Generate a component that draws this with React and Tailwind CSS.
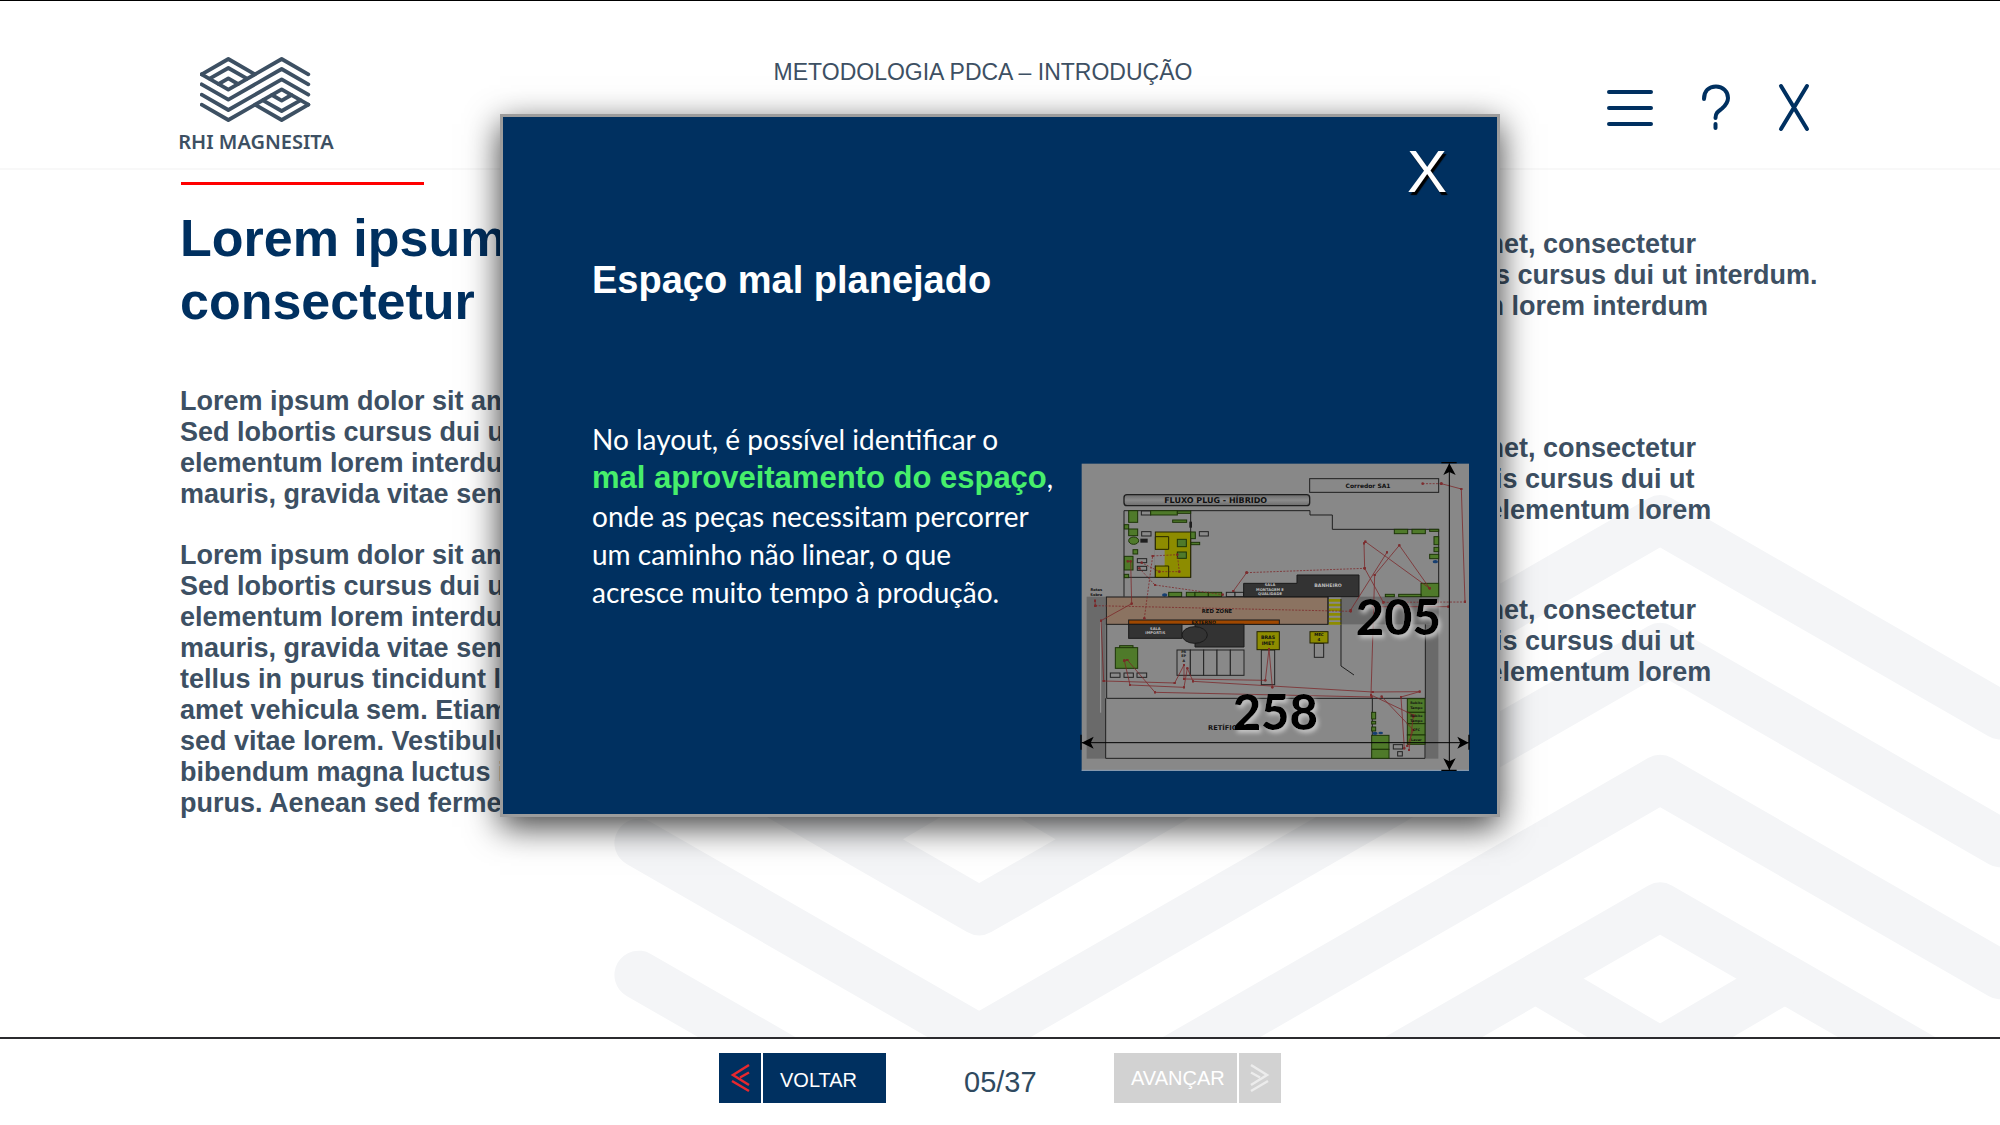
const LOGO_LINES = [
  "M155 134 L235 88 L315 134",
  "M155 134 L235 180 L395 88 L475 134",
  "M155 164 L235 210 L395 118 L475 164",
  "M155 195 L235 241 L395 149 L475 195",
  "M155 225 L235 271 L395 179 L475 225",
  "M315 225 L395 271 L475 225",
  "M179 147 L235 115 L291 147",
  "M206 163 L235 146 L264 163",
  "M339 212 L395 244 L451 212",
  "M366 196 L395 213 L424 196",
];

function LogoMark() {
  return LOGO_LINES.map((d) => <path key={d} d={d} />);
}

function Watermark() {
  return (
    <svg
      aria-hidden="true"
      className="pointer-events-none absolute inset-0 h-full w-full"
      viewBox="0 0 2000 868"
      preserveAspectRatio="xMaxYMax slice"
    >
      <g
        transform="translate(-21 -24) scale(4.256)"
        fill="none"
        stroke="#f4f5f7"
        strokeWidth="11.4"
        strokeLinecap="round"
        strokeLinejoin="round"
      >
        <LogoMark />
      </g>
    </svg>
  );
}

function Header() {
  return (
    <header className="flex h-[169px] items-start justify-between border-b-2 border-[#f8f8f8] pl-[178px] pr-[186px]">
      <a href="#inicio" className="mt-[55px] flex w-[156px] flex-col items-center text-[#3d5063]">
        <svg className="h-[67px] w-[112px]" viewBox="150 79 336 201" aria-hidden="true">
          <g fill="none" stroke="currentColor" strokeWidth="11.4" strokeLinecap="round" strokeLinejoin="round">
            <LogoMark />
          </g>
        </svg>
        <span className="mt-[7px] whitespace-nowrap font-['Noto_Sans',sans-serif] text-[20px] font-semibold leading-6">
          RHI MAGNESITA
        </span>
      </a>
      <p className="mt-[57px] flex-1 pl-[28px] text-center text-[23px] leading-7 text-[#3d5063]">
        METODOLOGIA PDCA – INTRODUÇÃO
      </p>
      <nav className="mt-[80px] flex text-[#003060]" aria-label="Ferramentas">
        <button type="button" aria-label="Menu">
          <svg className="h-[52px] w-[52px]" viewBox="0 0 52 52" fill="none" stroke="currentColor" strokeWidth="4" strokeLinecap="round">
            <path d="M5 11 H47 M5 27 H47 M5 43 H47" />
          </svg>
        </button>
        <button type="button" aria-label="Ajuda" className="ml-[38px]">
          <svg className="h-[52px] w-[44px]" viewBox="0 0 44 52" fill="none" stroke="currentColor" strokeWidth="4" strokeLinecap="round" strokeLinejoin="round">
            <path d="M10 18 C10 10 15 5.500 22 5.500 C29 5.500 34 10.500 34 17 C34 22 31.500 24.500 28 27.500 C24 30.500 21.500 32 21.500 37" />
            <path d="M21.500 43 V47" />
          </svg>
        </button>
        <button type="button" aria-label="Fechar curso" className="ml-[36px]">
          <svg className="h-[52px] w-[40px]" viewBox="0 0 40 52" fill="none" stroke="currentColor" strokeWidth="4" strokeLinecap="round">
            <path d="M7 5 L33 48 M33 5 L7 48" />
          </svg>
        </button>
      </nav>
    </header>
  );
}

const LEFT_PARAGRAPHS = [
  [
    "Lorem ipsum dolor sit amet, consectetur elit.",
    "Sed lobortis cursus dui ut interdum. Sed",
    "elementum lorem interdum, ultrices",
    "mauris, gravida vitae sem.",
  ],
  [
    "Lorem ipsum dolor sit amet, consectetur elit.",
    "Sed lobortis cursus dui ut interdum. Sed",
    "elementum lorem interdum, ultrices",
    "mauris, gravida vitae sem. Donec",
    "tellus in purus tincidunt lacinia sit",
    "amet vehicula sem. Etiam varius",
    "sed vitae lorem. Vestibulum non",
    "bibendum magna luctus id ornare",
    "purus. Aenean sed fermentum.",
  ],
];

function Lines({ lines }) {
  return lines.map((line) => (
    <span key={line} className="block whitespace-nowrap">
      {line}
    </span>
  ));
}

function Lesson() {
  return (
    <main className="relative flex-1 overflow-hidden">
      <Watermark />
      <div className="relative flex pl-[180px] text-[27px] font-bold leading-[31px] text-[#3d5063]">
        <section className="w-[994px] shrink-0 pt-[12px]">
          <div className="ml-px h-[3px] w-[243px] bg-[#ff0000]" />
          <h1 className="mt-[22px] text-[52px] leading-[63px] text-[#003060]">
            Lorem ipsum
            <br />
            consectetur
          </h1>
          <p className="mt-[53px]">
            <Lines lines={LEFT_PARAGRAPHS[0]} />
          </p>
          <p className="mt-[30px]">
            <Lines lines={LEFT_PARAGRAPHS[1]} />
          </p>
        </section>
        <section className="pt-[59px]">
          <p>
            <Lines
              lines={[
                "Lorem ipsum dolor sit amet, consectetur",
                "adipiscing elit. Duis purus cursus dui ut interdum.",
                "Interdum, Sed elementum lorem interdum",
              ]}
            />
          </p>
          <p className="mt-[111px]">
            <Lines
              lines={[
                "Lorem ipsum dolor sit amet, consectetur",
                "adipiscing elit Sed lobortis cursus dui ut",
                "Sed interdum. Sed vitae elementum lorem",
              ]}
            />
          </p>
          <p className="mt-[69px]">
            <Lines
              lines={[
                "Lorem ipsum dolor sit amet, consectetur",
                "adipiscing elit Sed lobortis cursus dui ut",
                "Sed interdum. Sed vitae elementum lorem",
              ]}
            />
          </p>
        </section>
      </div>
    </main>
  );
}

const GREEN_BOXES = [
  [176, 182, 27, 35], [242, 182, 80, 13], [322, 183, 40, 7], [308, 210, 42, 7],
  [163, 224, 13, 13], [176, 237, 27, 20], [362, 246, 14, 20], [363, 277, 26, 7],
  [189, 299, 14, 13], [163, 319, 26, 41], [163, 373, 13, 10], [296, 427, 39, 13],
  [349, 427, 26, 13], [375, 427, 40, 13], [415, 427, 40, 13], [973, 238, 40, 13],
  [1026, 238, 40, 13], [1079, 238, 27, 6], [1092, 260, 14, 24], [1092, 292, 14, 13],
  [1079, 313, 27, 13], [1053, 400, 53, 40], [946, 433, 27, 7], [986, 433, 67, 7],
  [149, 587, 40, 10], [136, 593, 67, 62], [905, 787, 12, 20], [905, 814, 12, 8],
  [905, 831, 12, 12], [905, 856, 52, 42], [905, 898, 52, 27], [1012, 746, 53, 41],
  [1012, 787, 53, 34], [1012, 821, 53, 34], [1012, 855, 53, 28],
];

const OUTLINE_BOXES = [
  [214, 183, 28, 12], [215, 245, 28, 13], [388, 245, 27, 13], [202, 326, 28, 12],
  [202, 349, 28, 12], [469, 427, 26, 13], [495, 427, 26, 13], [121, 669, 29, 13],
  [162, 669, 28, 13], [201, 669, 29, 13], [321, 600, 40, 76], [361, 600, 40, 76],
  [401, 600, 40, 76], [441, 600, 40, 76], [481, 600, 41, 76], [574, 600, 40, 104],
  [733, 580, 28, 42], [970, 884, 28, 13], [983, 905, 14, 13],
];

const ROUTES = [
  "M173 334 L182 334 L185 461 L93 512 L101 693 L314 699 L342 645 L342 687 L586 691 L597 597 L607 712",
  "M163 632 L180 705 L342 712 L352 655 L369 694 L908 726 L1049 725 L993 741 L1003 895",
  "M163 632 L172 630 L255 727 L905 741",
  "M490 423 L530 368",
  "M842 480 L951 307",
  "M1079 415 L886 275 L882 280 L884 355 L940 457",
  "M1079 415 L988 286 L914 375 L903 735 L1030 795",
  "M908 470 L1135 470",
  "M935 740 L1030 840 L1012 888 M1030 800 L1017 900",
  "M1114 101 L1174 117 L1185 455",
  "M75 452 L76 468",
];

const DASHED_ROUTES = [
  "M530 368 L884 355",
  "M76 467 L842 484",
  "M223 505 L248 318 L322 314 L328 365 L268 365 L215 338",
  "M208 355 L255 405 L458 434",
  "M1058 101 L1114 101",
  "M940 457 L1185 456",
];

function Boxes({ boxes }) {
  return boxes.map(([x, y, width, height]) => (
    <rect key={`${x}-${y}`} x={x} y={y} width={width} height={height} />
  ));
}

function FloorPlan() {
  return (
    <svg
      role="img"
      aria-label="Layout Fluxo Plug - Híbrido"
      className="w-[390px] shrink-0 font-['DejaVu_Sans',sans-serif] font-bold"
      viewBox="30 36 1170 928"
    >
      <defs>
        <marker id="dot" viewBox="0 0 8 8" refX="4" refY="4" markerWidth="8" markerHeight="8" markerUnits="userSpaceOnUse">
          <circle cx="4" cy="4" r="4" fill="#7c2426" />
        </marker>
        <filter id="halo" x="-20%" y="-20%" width="150%" height="160%">
          <feDropShadow dx="7" dy="9" stdDeviation="6" floodColor="#d0d0d0" floodOpacity="0.85" />
        </filter>
        <linearGradient id="plate" x1="0" y1="0" x2="0" y2="1">
          <stop offset="0" stopColor="#6c6c6c" />
          <stop offset="0.5" stopColor="#8c8c8c" />
          <stop offset="1" stopColor="#6c6c6c" />
        </linearGradient>
      </defs>
      <rect x="35" y="41" width="1162" height="921" fill="#888888" />
      <path d="M35 961 H1197" stroke="#8fa3b8" strokeWidth="3" />
      <rect x="50" y="440" width="57" height="486" fill="#6a6a6a" />
      <rect x="1066" y="523" width="39" height="403" fill="#6a6a6a" />
      <rect x="812" y="440" width="294" height="83" fill="#6a6a6a" />
      <path d="M92 512 V788" stroke="#999999" strokeWidth="3" />

      <g fill="none" stroke="#1f1f1f" strokeWidth="3">
        <rect x="719" y="86" width="387" height="41" />
        <rect x="162" y="134" width="557" height="33" rx="9" fill="url(#plate)" strokeWidth="4" />
        <path d="M162 440 V182 H720 V195 H787 V238 H1106 V440" />
        <path d="M362 182 V383 M162 382 H256" />
        <path d="M110 523 V745 H1066 V523 M107 745 V925 H1065 V745 M907 745 V925" />
        <path d="M813 523 V648 L852 675" />
      </g>
      <g fill="#898989" stroke="#222222" strokeWidth="3">
        <Boxes boxes={OUTLINE_BOXES} />
      </g>
      <g fill="#8d8c00" stroke="#242400" strokeWidth="3">
        <rect x="256" y="246" width="106" height="136" />
        <path d="M256 260 H296 V298 H256 Z M256 348 H296 V382 H256 Z" />
        <rect x="561" y="545" width="67" height="54" />
        <rect x="720" y="545" width="54" height="34" />
      </g>
      <rect x="253" y="300" width="31" height="46" fill="#888888" />
      <g fill="#4f7a2a" stroke="#1d3508" strokeWidth="3">
        <Boxes boxes={GREEN_BOXES} />
        <rect x="322" y="268" width="27" height="22" />
        <rect x="322" y="306" width="27" height="19" />
        <ellipse cx="191" cy="272" rx="15" ry="11" />
      </g>
      <g fill="#1e1e1e">
        <rect x="211" y="266" width="22" height="12" />
        <rect x="358" y="215" width="8" height="18" />
      </g>
      <g fill="#173f70">
        <ellipse cx="284" cy="435" rx="8" ry="5" />
        <ellipse cx="1096" cy="335" rx="8" ry="5" />
        <ellipse cx="915" cy="850" rx="8" ry="5" />
        <ellipse cx="932" cy="849" rx="7" ry="4" />
      </g>
      <g stroke="#1a1a1a" strokeWidth="3">
        <rect x="109" y="441" width="665" height="82" fill="#8b7361" />
        <rect x="176" y="510" width="452" height="13" fill="#a04800" />
        <g fill="#333333">
          <path d="M521 440 V400 H681 V375 H867 V440 Z" />
          <rect x="176" y="523" width="160" height="42" />
          <path d="M375 523 H522 V591 H375 Z" />
          <ellipse cx="374" cy="555" rx="38" ry="25" />
        </g>
      </g>
      <g stroke="#8d8c00" strokeWidth="8">
        <path d="M776 451 H814 M776 465 H814 M776 479 H814 M776 493 H814 M776 507 H814 M776 520 H814" />
      </g>
      <path d="M813 447 V523 M774 441 V523" stroke="#222222" strokeWidth="3" />

      <g fill="none" stroke="#7c2426" strokeWidth="2.500" opacity="0.9">
        {ROUTES.map((d) => (
          <path key={d} d={d} markerStart="url(#dot)" markerMid="url(#dot)" markerEnd="url(#dot)" />
        ))}
        {DASHED_ROUTES.map((d) => (
          <path key={d} d={d} strokeDasharray="6 4" markerStart="url(#dot)" markerMid="url(#dot)" markerEnd="url(#dot)" />
        ))}
      </g>

      <g fill="#111111" textAnchor="middle">
        <text x="437" y="159" fontSize="24">FLUXO PLUG - HÍBRIDO</text>
        <text x="894" y="113" fontSize="18">Corredor SA1</text>
        <text x="441" y="488" fontSize="16">RED ZONE</text>
        <text x="401" y="521" fontSize="14">EXTERNO</text>
        <text x="79" y="422" fontSize="11">Rotas</text>
        <text x="79" y="437" fontSize="11">Sobra</text>
        <text x="594" y="567" fontSize="14">BRAS</text>
        <text x="594" y="585" fontSize="14">IMET</text>
        <text x="747" y="559" fontSize="12">MEC</text>
        <text x="747" y="574" fontSize="12">4</text>
        <text x="341" y="609" fontSize="10">PR</text>
        <text x="341" y="622" fontSize="10">EP</text>
        <text x="341" y="635" fontSize="10">A</text>
        <text x="1039" y="763" fontSize="10">Rebite</text>
        <text x="1039" y="777" fontSize="10">Tampo</text>
        <text x="1039" y="801" fontSize="10">Rebite</text>
        <text x="1039" y="815" fontSize="10">Tampo</text>
        <text x="1039" y="842" fontSize="10">CFC</text>
        <text x="1039" y="872" fontSize="10">Lavar</text>
        <text x="472" y="839" fontSize="20">RETÍFICAS</text>
      </g>
      <g fill="#bdbdbd" textAnchor="middle" fontSize="11">
        <text x="600" y="409">SALA</text>
        <text x="600" y="422">MONTAGEM E</text>
        <text x="600" y="435">QUALIDADE</text>
        <text x="774" y="411" fontSize="14">BANHEIRO</text>
        <text x="256" y="539">SALA</text>
        <text x="256" y="553">IMPORTIS</text>
      </g>

      <g stroke="#000000" strokeWidth="3">
        <path d="M1138 40 V961 M35 878 H1196" />
        <path d="M1114 38 H1160 M1114 961 H1160 M33 854 V899 M1197 854 V899" strokeWidth="4" />
      </g>
      <path d="M1138 40 L1157 75 L1138 66 L1120 75 Z M1138 960 L1157 925 L1138 934 L1120 925 Z M35 878 L71 860 L62 878 L71 896 Z M1196 878 L1162 860 L1171 878 L1162 896 Z" />
      <g fontSize="147" filter="url(#halo)" textAnchor="middle" className="font-[Lato,sans-serif] font-black">
        <text x="985" y="555">205</text>
        <text x="616" y="840">258</text>
      </g>
    </svg>
  );
}

function Modal() {
  return (
    <div
      role="dialog"
      aria-labelledby="modal-title"
      className="absolute inset-x-0 top-[113px] mx-auto w-[1000px] border-[3px] border-[#9c9c9c] bg-[#003060] pb-[43px] pl-[89px] pr-[27px] pt-[20px] text-white shadow-[0_10px_32px_rgba(0,0,0,0.75)]"
    >
      <div className="flex justify-end pr-[23px]">
        <button type="button" aria-label="Fechar" className="text-[60px] leading-[70px] [text-shadow:2px_3px_1px_#000]">
          X
        </button>
      </div>
      <h2 id="modal-title" className="mt-[51px] text-[38px] font-bold leading-[44px]">
        Espaço mal planejado
      </h2>
      <div className="mt-[118px] flex items-start justify-between">
        <p className="whitespace-nowrap font-[Lato,sans-serif] text-[28px] leading-[38px]">
          No layout, é possível identificar o
          <br />
          <strong className="font-['Liberation_Sans',sans-serif] text-[31px] leading-[38px] text-[#47ef6b]">
            mal aproveitamento do espaço
          </strong>
          ,<br />
          onde as peças necessitam percorrer
          <br />
          um caminho não linear, o que
          <br />
          acresce muito tempo à produção.
        </p>
        <div className="mt-[42px] flex">
          <FloorPlan />
        </div>
      </div>
    </div>
  );
}

function Footer() {
  return (
    <footer className="flex h-[88px] items-start justify-center gap-[78px] border-t-2 border-[#2b2b2e] bg-white pt-[14px]">
      <button type="button" className="flex h-[50px] w-[167px] gap-[2px] text-[20px] text-white">
        <span className="flex h-full w-[42px] items-center justify-center bg-[#003060]">
          <svg className="h-[30px] w-[20px]" viewBox="0 0 20 30" fill="none" stroke="#e8282e" strokeWidth="2.500" aria-hidden="true">
            <path d="M19 2 L3 12 L19 22 M19 9.500 L10 14.500 M2 18 L19 28" />
          </svg>
        </span>
        <span className="flex h-full flex-1 items-center bg-[#003060] pl-[17px] pt-[3px]">VOLTAR</span>
      </button>
      <p className="w-[72px] pt-[13px] text-center text-[29px] leading-[32px] text-[#2f4a60]">05/37</p>
      <button type="button" className="flex h-[50px] w-[167px] gap-[2px] text-[20px] text-white">
        <span className="flex h-full flex-1 items-center bg-[#d2d2d2] pl-[17px]">AVANÇAR</span>
        <span className="flex h-full w-[42px] items-center justify-center bg-[#d2d2d2]">
          <svg className="h-[30px] w-[20px]" viewBox="0 0 20 30" fill="none" stroke="#ececec" strokeWidth="2.500" aria-hidden="true">
            <path d="M1 2 L17 12 L1 22 M1 9.500 L10 14.500 M18 18 L1 28" />
          </svg>
        </span>
      </button>
    </footer>
  );
}

export default function App() {
  return (
    <div className="relative flex min-h-screen flex-col overflow-hidden border-t border-black bg-white font-['Liberation_Sans',Arial,sans-serif]">
      <Header />
      <Lesson />
      <Footer />
      <Modal />
    </div>
  );
}
